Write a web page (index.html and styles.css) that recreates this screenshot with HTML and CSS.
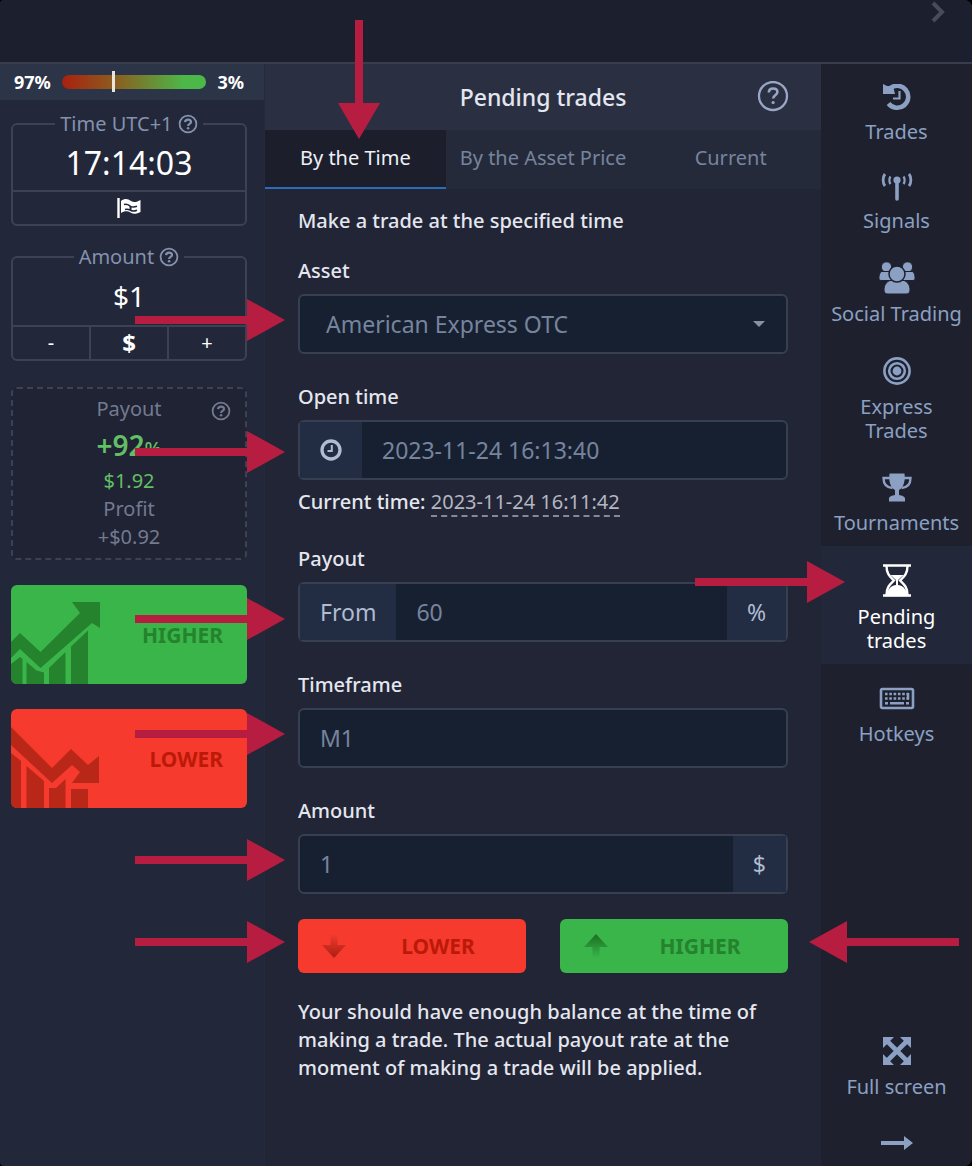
FILE: index.html
```html
<!DOCTYPE html>
<html lang="en">
<head>
<meta charset="utf-8">
<meta name="viewport" content="width=device-width, initial-scale=1">
<title>Pending trades</title>
<link rel="stylesheet" href="styles.css">
</head>
<body>
<svg class="defs" aria-hidden="true">
  <defs>
    <symbol id="help" viewBox="0 0 20 20"><circle cx="10" cy="10" r="8.4" fill="none" stroke="currentColor" stroke-width="1.8"/><path d="M7 8.200C7.200 6.400 8.400 5.600 10 5.600C11.800 5.600 13 6.500 13 8C13 10 10.100 9.900 10.100 12" fill="none" stroke="currentColor" stroke-width="2.200"/><circle cx="10.100" cy="14.200" r="1.300" fill="currentColor"/></symbol>
    <symbol id="pointer" viewBox="0 0 150 42"><path d="M0 17h112V0l38 21-38 21V25H0z" fill="currentColor"/></symbol>
    <linearGradient id="fade-down" x1="0" y1="0" x2="0" y2="1"><stop offset="0" stop-color="#a81e10" stop-opacity="0"/><stop offset="1" stop-color="#a81e10"/></linearGradient>
    <linearGradient id="fade-up" x1="0" y1="0" x2="0" y2="1"><stop offset="0" stop-color="#1b6e22"/><stop offset="1" stop-color="#1b6e22" stop-opacity="0"/></linearGradient>
  </defs>
</svg>
<div class="app">
  <header class="topbar">
    <button class="icon-button" aria-label="Next"><svg width="16" height="24" viewBox="0 0 16 24"><path d="M3 3l9 9-9 9" fill="none" stroke="currentColor" stroke-width="4"/></svg></button>
  </header>
  <div class="columns">
    <aside class="deal">
      <div class="sentiment">
        <span>97%</span>
        <div class="gauge"><div class="gauge-mark"></div></div>
        <span>3%</span>
      </div>
      <div class="deal-body">
        <div class="boxes">
          <fieldset class="box">
            <legend>Time UTC+1 <svg class="help"><use href="#help"/></svg></legend>
            <div class="box-value box-time">17:14:03</div>
            <div class="box-actions">
              <button aria-label="Expiration mode"><svg width="26" height="22" viewBox="0 0 26 22"><path d="M2.500 1v20" stroke="currentColor" stroke-width="2.400"/><path d="M5 4c4-3 7-2 10 0s6 1 9.500-1v12c-4 2-7 2.500-10 .5S8 14 5 16z" fill="currentColor"/><path d="M8 7.500c3-1 4 0 6 1.500s5 1 7 .3M9 12.500c3-1 4 0 6 1s4 .5 6-.3" fill="none" stroke="#22273a" stroke-width="1.500"/><path d="M14.500 9v4" stroke="#22273a" stroke-width="2"/></svg></button>
            </div>
          </fieldset>
          <fieldset class="box">
            <legend>Amount <svg class="help"><use href="#help"/></svg></legend>
            <div class="box-value box-amount">$1</div>
            <div class="box-actions">
              <button>-</button><button class="currency">$</button><button>+</button>
            </div>
          </fieldset>
        </div>
        <section class="payout">
          <svg class="help payout-help"><use href="#help"/></svg>
          <div class="payout-title">Payout</div>
          <div class="payout-rate">+92<small>%</small></div>
          <div class="payout-sum">$1.92</div>
          <div>Profit</div>
          <div class="payout-profit">+$0.92</div>
        </section>
        <button class="trade trade-higher">
          <svg width="90" height="98" viewBox="0 0 90 98" fill="#25832d"><path d="M0 56L9 47L29.500 66L69 27L61 16H89V42L81 37L29.500 82L9 63L0 72z"/><path d="M0 78l9-7 2.500 2v25H0zM15.500 76l10 8.500 7.500 2V98H15.500zM38 82l16.500-16v32H38zM60 60.500l17-16V98H60z"/></svg>
          <span>HIGHER</span>
        </button>
        <button class="trade trade-lower">
          <svg width="90" height="98" viewBox="0 0 90 98" fill="#b92719"><path d="M0 17l41 41 19-19 17 16 11-9v27H61l8-11-8-7-20 18L0 35z"/><path d="M0 43l10 8v47H0zM15.500 56L33 71v27H15.500zM38 78h7l9.500-9v29H38zM60 79h17v19H60z"/></svg>
          <span>LOWER</span>
        </button>
      </div>
    </aside>

    <main class="panel">
      <div class="panel-head">
        <h1>Pending trades</h1>
        <button class="icon-button" aria-label="Help"><svg width="32" height="32" viewBox="0 0 32 32"><circle cx="16" cy="15" r="14" fill="none" stroke="currentColor" stroke-width="2.300"/><path d="M11.800 11.500c.1-2.800 2-4 4.300-4 2.600 0 4.300 1.300 4.300 3.600 0 3.200-4.300 3-4.300 6.400" fill="none" stroke="currentColor" stroke-width="2.600"/><circle cx="16.100" cy="21.500" r="1.600" fill="currentColor"/></svg></button>
      </div>
      <nav class="tabs">
        <a class="tab active" href="#time">By the Time<svg class="pointer pointer-down" viewBox="0 0 42 119"><path d="M17 0v83H0l21 36 21-36H25V0z" fill="currentColor"/></svg></a>
        <a class="tab" href="#price">By the Asset Price</a>
        <a class="tab" href="#current">Current</a>
      </nav>
      <form class="form">
        <p class="intro">Make a trade at the specified time</p>
        <div class="field">
          <label for="asset">Asset</label>
          <div class="control">
            <select id="asset"><option>American Express OTC</option></select>
            <svg class="caret" width="12" height="6" viewBox="0 0 12 6"><path d="M0 0h12L6 6z" fill="currentColor"/></svg>
            <svg class="pointer"><use href="#pointer"/></svg>
          </div>
        </div>
        <div class="field">
          <label for="open">Open time</label>
          <div class="control">
            <span class="addon"><svg width="22" height="22" viewBox="0 0 22 22" fill="none" stroke="currentColor"><circle cx="11" cy="11" r="9" stroke-width="3.300"/><path d="M11.800 6v6H7.500" stroke-width="2"/></svg></span>
            <input id="open" type="text" value="2023-11-24 16:13:40">
            <svg class="pointer pointer-mid"><use href="#pointer"/></svg>
          </div>
          <p class="now">Current time: <a href="#now">2023-11-24 16:11:42</a></p>
        </div>
        <div class="field">
          <label for="payout">Payout</label>
          <div class="control">
            <span class="addon">From</span>
            <input id="payout" type="text" value="60">
            <span class="addon">%</span>
            <svg class="pointer pointer-low"><use href="#pointer"/></svg>
          </div>
        </div>
        <div class="field">
          <label for="frame">Timeframe</label>
          <div class="control">
            <input id="frame" type="text" value="M1">
            <svg class="pointer"><use href="#pointer"/></svg>
          </div>
        </div>
        <div class="field">
          <label for="amount">Amount</label>
          <div class="control">
            <input id="amount" type="text" value="1">
            <span class="addon">$</span>
            <svg class="pointer"><use href="#pointer"/></svg>
          </div>
        </div>
        <div class="submit">
          <button type="button" class="order order-lower"><svg width="24" height="26" viewBox="0 0 24 26"><path d="M8.500 1h7v11H24L12 25 0 12h8.500z" fill="url(#fade-down)"/></svg><span>LOWER</span></button>
          <button type="button" class="order order-higher"><svg width="24" height="26" viewBox="0 0 24 26"><path d="M8.500 25h7V14H24L12 1 0 14h8.500z" fill="url(#fade-up)"/></svg><span>HIGHER</span></button>
          <svg class="pointer pointer-submit"><use href="#pointer"/></svg>
          <svg class="pointer pointer-left" viewBox="0 0 150 42"><path d="M150 17H38V0L0 21l38 21V25h112z" fill="currentColor"/></svg>
        </div>
        <p class="note">Your should have enough balance at the time of making a trade. The actual payout rate at the moment of making a trade will be applied.</p>
      </form>
    </main>

    <nav class="menu">
      <a href="#trades"><svg width="30" height="28" viewBox="0 0 30 28"><path d="M8 4.500A11 11 0 1 1 6.500 19.500" fill="none" stroke="currentColor" stroke-width="4.600"/><path d="M1 0l4 2 6 0 2 8H1z" fill="currentColor"/><path d="M17.500 7v7.500H11" fill="none" stroke="currentColor" stroke-width="2.200"/></svg><span>Trades</span></a>
      <a href="#signals"><svg width="32" height="28" viewBox="0 0 32 28" fill="none" stroke="currentColor"><circle cx="16" cy="7" r="3.600" fill="currentColor" stroke="none"/><path d="M16 8v18" stroke-width="3.600" stroke-linecap="round"/><path d="M4 1C1.500 4 1.500 10 4 13M28 1c2.500 3 2.500 9 0 12" stroke-width="2.800"/><path d="M9.500 3.500c-1.500 2-1.500 5.500 0 7.500M22.500 3.500c1.500 2 1.500 5.500 0 7.500" stroke-width="2.200"/></svg><span>Signals</span></a>
      <a href="#social"><svg width="36" height="32" viewBox="0 0 36 32" fill="currentColor" stroke="#1e202e"><circle cx="7.500" cy="5" r="5.200" stroke-width="1"/><circle cx="28.500" cy="5" r="5.200" stroke-width="1"/><path d="M3 9.500h10v9H3c-3 0-3-1-3-3s1-6 3-6zM33 9.500H23v9h10c3 0 3-1 3-3s-1-6-3-6z" stroke-width="1"/><path d="M11 18.500h14c4 1.500 6 5 6 9.500 0 3-1.500 4-4 4H9c-2.500 0-4-1-4-4 0-4.500 2-8 6-9.500z" stroke-width="1"/><circle cx="18" cy="12" r="8" stroke-width="1.500"/></svg><span>Social Trading</span></a>
      <a href="#express"><svg width="28" height="32" viewBox="0 0 28 32" fill="none" stroke="currentColor" stroke-width="2.600"><circle cx="14" cy="16" r="12.600"/><circle cx="14" cy="16" r="7.800"/><circle cx="14" cy="16" r="4.400" fill="currentColor" stroke="none"/></svg><span>Express<br>Trades</span></a>
      <a href="#tournaments"><svg width="30" height="31" viewBox="0 0 30 31"><path d="M8 6H1.500c0 6 3 9.500 9 10M22 6h6.500c0 6-3 9.500-9 10" fill="none" stroke="currentColor" stroke-width="2.400"/><path d="M7.500 1.500h15c1 8-1 14-5.500 16.500v5c3 .5 6 1.500 6 3.500v3H7v-3c0-2 3-3 6-3.500v-5C8.500 15.500 6.500 9.500 7.500 1.500z" fill="currentColor"/></svg><span>Tournaments</span></a>
      <a class="active" href="#pending"><svg width="28" height="33" viewBox="0 0 28 33"><path d="M0 1.500h28M0 31.500h28" stroke="currentColor" stroke-width="2.600"/><path d="M3.500 2c0 8 3.500 10.500 7.500 14.500C7 20.500 3.500 23 3.500 31h21c0-8-3.500-10.500-7.500-14.500C21 12.500 24.500 10 24.500 2" fill="none" stroke="currentColor" stroke-width="2.400"/><path d="M7.500 11h13L15 16v5c4 .5 8 3 9.500 10h-21C5 24 9 21.500 13 21v-5z" fill="currentColor"/></svg><span>Pending<br>trades</span><svg class="pointer pointer-menu"><use href="#pointer"/></svg></a>
      <a href="#hotkeys"><svg width="36" height="32" viewBox="0 0 36 32" fill="none" stroke="currentColor"><rect x="2" y="7" width="32" height="19" rx="1.500" stroke-width="2.600"/><path d="M6 12h24M6 16.500h24" stroke-width="2.600" stroke-dasharray="2.600 1.700"/><path d="M6 21.300h3M11 21.300h14M27 21.300h3M29 11v6.500" stroke-width="2.600"/></svg><span>Hotkeys</span></a>
      <a class="menu-bottom" href="#full"><svg width="28" height="32" viewBox="0 0 28 32"><path d="M5 7l18 18M23 7L5 25" stroke="currentColor" stroke-width="4.600"/><path d="M0 2h11L0 13zM28 2v11L17 2zM0 30V19l11 11zM28 30H17l11-11z" fill="currentColor"/></svg><span>Full screen</span></a>
      <button class="collapse" aria-label="Collapse menu"><svg width="32" height="16" viewBox="0 0 32 16"><path d="M0 6h23V1l9 7-9 7v-5H0z" fill="currentColor"/></svg></button>
    </nav>
  </div>
</div>
</body>
</html>
```
FILE: styles.css
```css
* { box-sizing: border-box; }

body {
  margin: 0;
  background: #000;
  color: #e4e7f0;
  font: 20px/28px "Noto Sans", "Open Sans", sans-serif;
}

p, h1 { margin: 0; }

a { color: inherit; text-decoration: none; }

button, input, select { font: inherit; color: inherit; margin: 0; }

button { background: none; border: 0; padding: 0; cursor: pointer; }

svg { display: block; }

.defs { position: absolute; width: 0; height: 0; }

.app {
  display: flex;
  flex-direction: column;
  min-height: 100vh;
  background: #22273a;
  border-radius: 4px 8px 8px 4px;
  overflow: hidden;
}

.topbar {
  display: flex;
  justify-content: flex-end;
  height: 64px;
  padding-right: 26px;
  background: #1c1f2e;
  border-bottom: 2px solid #393c4e;
}

.topbar .icon-button { align-self: flex-start; color: #484b5a; }

.columns {
  flex: 1;
  display: grid;
  grid-template-columns: 264px minmax(0, 1fr) 151px;
}

/* Deal column */
.sentiment {
  display: flex;
  align-items: center;
  gap: 11px;
  height: 36px;
  padding: 0 20px 0 14px;
  background: #2c3448;
  color: #fff;
  font-size: 18px;
  font-weight: 700;
}

.gauge {
  position: relative;
  flex: 1;
  height: 14px;
  border-radius: 7px;
  background: linear-gradient(90deg, #a9200f, #8a5f20 38%, #4cb848 85%);
}

.gauge-mark {
  position: absolute;
  left: 35%;
  top: -4px;
  width: 3px;
  height: 21px;
  background: #e9e4dc;
}

.deal-body {
  display: flex;
  flex-direction: column;
  gap: 25px;
  padding: 10px 17px 24px 11px;
}

.boxes { display: grid; gap: 17px; padding-bottom: 1px; }

.help { display: inline-block; width: 20px; height: 20px; vertical-align: -3px; }

.box {
  min-width: 0;
  margin: 0;
  padding: 0;
  border: 2px solid #3c4254;
  border-radius: 6px;
  text-align: center;
}

.box legend { margin: 0 auto; padding: 0 5px; color: #8492ad; line-height: 28px; }

.box-value { color: #fff; line-height: 50px; }

.box-time { height: 52px; font-size: 32px; }

.box-amount { height: 54px; font-size: 28px; }

.box-actions { display: flex; border-top: 2px solid #3c4254; }

.box-actions button {
  flex: 1;
  display: flex;
  justify-content: center;
  align-items: center;
  height: 32px;
  color: #fff;
}

.box-actions button + button { border-left: 2px solid #3c4254; }

.box-actions .currency { font-size: 24px; font-weight: 700; }

.payout {
  position: relative;
  padding: 6px 0 7px;
  border: 2px dashed #3c4254;
  border-radius: 6px;
  background: #1f2333;
  color: #737a90;
  text-align: center;
}

.payout-help { position: absolute; right: 14px; top: 12px; }

.payout-rate { height: 44px; color: #62bf63; font-size: 28px; font-weight: 600; line-height: 44px; }

.payout-rate small { font-size: 20px; font-weight: 500; line-height: 1; }

.payout-sum { color: #62bf63; }

.trade {
  display: flex;
  align-items: center;
  justify-content: space-between;
  height: 99px;
  padding-right: 24px;
  border-radius: 6px;
  overflow: hidden;
  font-size: 21px;
  font-weight: 700;
}

.trade-higher, .order-higher { background: #39b54a; color: #25832d; }

.trade-lower, .order-lower { background: #f63a2e; color: #bb1a08; }

/* Pending trades panel */
.panel { background: #222535; border-left: 1px solid #252a3b; }

.panel-head {
  display: grid;
  grid-template-columns: 32px 1fr 32px;
  align-items: center;
  height: 66px;
  padding: 0 32px;
  background: #2a3042;
}

.panel-head h1 { grid-column: 2; font-size: 23px; font-weight: 500; text-align: center; }

.panel-head .icon-button { color: #9aa7c4; }

.tabs {
  display: grid;
  grid-template-columns: 1fr auto 1fr;
  background: #252a3b;
  color: #76849d;
  text-align: center;
}

.tab { position: relative; padding: 14px 14px 15px; border-bottom: 2px solid transparent; }

.tab.active { background: #1c1e2c; border-color: #2b6cb8; color: #eef0f6; }

.form { padding: 18px 33px 24px; }

.intro { margin-bottom: 22px; }

.field { margin-bottom: 29px; }

.field label { display: block; margin-bottom: 9px; }

.intro, .field label, .now, .note { font-weight: 500; }

.control {
  position: relative;
  display: flex;
  height: 60px;
  border: 2px solid #364051;
  border-radius: 6px;
  background: #172031;
  color: #76849d;
  font-size: 23px;
}

.control input, .control select {
  flex: 1;
  min-width: 0;
  padding: 0 20px;
  border: 0;
  background: none;
  outline: 0;
}

.control select { padding: 0 26px; appearance: none; }

.caret { position: absolute; right: 21px; top: 25px; color: #8591a5; }

.addon {
  display: flex;
  align-items: center;
  padding: 0 20px;
  background: #222d44;
  color: #b1bcd0;
}

.now { margin-top: 8px; }

.now a { color: #b4b6c2; border-bottom: 2px dashed #858897; font-weight: 400; }

.submit {
  position: relative;
  display: grid;
  grid-template-columns: 1fr 1fr;
  gap: 34px;
  margin: -4px 0 25px;
}

.order {
  display: flex;
  align-items: center;
  height: 54px;
  padding: 0 24px;
  border-radius: 6px;
  font-size: 21px;
  font-weight: 700;
}

.order span { flex: 1; padding-left: 28px; text-align: center; }

/* Side menu */
.menu {
  display: flex;
  flex-direction: column;
  padding-top: 2px;
  background: #1e202e;
  color: #8ba0c2;
  line-height: 24px;
  text-align: center;
}

.menu a { position: relative; padding: 18px 0 11px; }

.menu a > svg:first-child { margin: 0 auto 8px; }

.menu a > span { display: block; }

.menu .active { background: #22283a; color: #fff; }

.menu .menu-bottom { margin-top: auto; }

.collapse { display: flex; justify-content: center; height: 56px; padding-top: 25px; color: #8ba0c2; }

/* Red callout arrows laid over the interface */
.pointer {
  position: absolute;
  z-index: 2;
  right: calc(100% + 15px);
  top: 50%;
  width: 150px;
  height: 42px;
  margin-top: -25px;
  color: #b71d40;
  pointer-events: none;
}

.pointer-mid { margin-top: -19px; }

.pointer-low { margin-top: -14px; }

.pointer-down {
  right: auto;
  left: 73px;
  top: -110px;
  width: 42px;
  height: 119px;
  margin-top: 0;
}

.pointer-submit { right: calc(100% + 13px); }

.pointer-left { right: auto; left: calc(100% + 21px); }

.pointer-menu { right: calc(100% - 24px); top: 15px; margin-top: 0; }
```
